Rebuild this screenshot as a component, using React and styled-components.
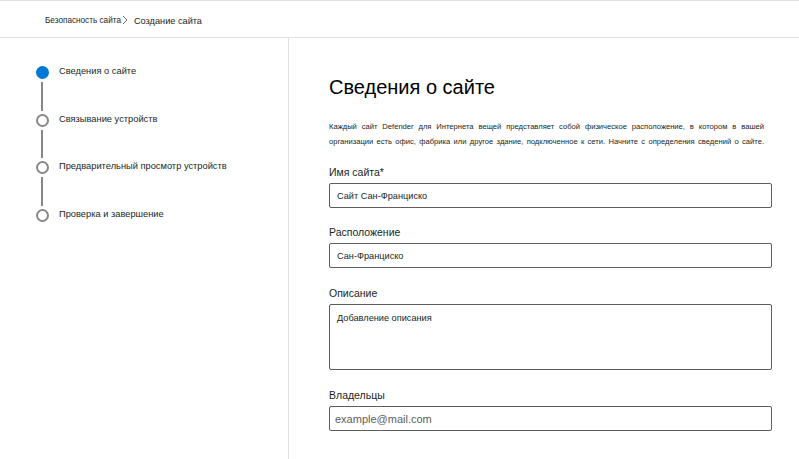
import React from "react";
import styled, { createGlobalStyle } from "styled-components";

const Global = createGlobalStyle`
  html, body { margin: 0; padding: 0; background: #fff; }
  body { font-family: "Liberation Sans", Arial, sans-serif; color: #201f1e; }
  * { box-sizing: border-box; }
`;

const Page = styled.div`
  width: 799px;
  height: 459px;
  display: flex;
  flex-direction: column;
  border-top: 1px solid #e1e1e1;
  overflow: hidden;
`;

const Header = styled.div`
  height: 37px;
  flex: none;
  display: flex;
  align-items: center;
  padding: 3px 0 0 45px;
  border-bottom: 1px solid #e1e1e1;
`;

const Crumb = styled.span`
  font-size: ${(p) => (p.$current ? "9.2px" : "8.2px")};
  color: #201f1e;
`;

const Chevron = styled.svg`
  width: 8px;
  height: 10px;
  margin: 0 5px 2px 0;
`;

const Body = styled.div`
  flex: 1;
  display: flex;
`;

const Side = styled.div`
  width: 289px;
  flex: none;
  border-right: 1px solid #e1e1e1;
  padding: 28px 0 0 36px;
`;

const Step = styled.div`
  display: flex;
  align-items: flex-start;
  height: ${(p) => (p.$last ? "auto" : "47.5px")};
`;

const Marker = styled.div`
  width: 12px;
  flex: none;
  display: flex;
  flex-direction: column;
  align-items: center;
  align-self: stretch;
`;

const Dot = styled.div`
  width: 13px;
  height: 13px;
  border-radius: 50%;
  flex: none;
  background: ${(p) => (p.$active ? "#0078d4" : "#fff")};
  border: ${(p) => (p.$active ? "none" : "2px solid #8a8886")};
`;

const Line = styled.div`
  width: 2px;
  flex: 1;
  background: #8a8886;
  margin: 3px 0 3px;
`;

const StepLabel = styled.span`
  font-size: 9.3px;
  margin-left: 11px;
  line-height: 13px;
  margin-top: -1px;
  color: #201f1e;
`;

const Main = styled.div`
  flex: 1;
  padding: 36px 27px 0 40px;
`;

const Title = styled.h1`
  margin: 0;
  font-size: 20px;
  font-weight: 400;
  line-height: 26px;
  color: #000;
`;

const Desc = styled.div`
  margin: 19px 8px 0 0;
  font-size: 7.6px;
  line-height: 15px;
  color: #201f1e;
`;

const DescLine = styled.span`
  display: block;
  text-align: justify;
  text-align-last: justify;
  white-space: nowrap;
`;

const Field = styled.div`
  display: flex;
  flex-direction: column;
  margin-top: ${(p) => p.$mt || "17px"};
`;

const Label = styled.label`
  font-size: 10.5px;
  line-height: 14px;
  margin-bottom: 4px;
  color: #201f1e;
`;

const Input = styled.div`
  height: ${(p) => p.$h || "25px"};
  border: 1px solid #605e5c;
  border-radius: 2px;
  display: flex;
  align-items: ${(p) => (p.$multi ? "flex-start" : "center")};
  padding: ${(p) => (p.$multi ? "8px 6px" : "0 7px")};
  font-size: ${(p) => (p.$placeholder ? "11px" : "9.2px")};
  color: ${(p) => (p.$placeholder ? "#605e5c" : "#201f1e")};
  padding-left: ${(p) => (p.$placeholder ? "5px" : "7px")};
`;

const steps = [
  "Сведения о сайте",
  "Связывание устройств",
  "Предварительный просмотр устройств",
  "Проверка и завершение",
];

export default function App() {
  return (
    <>
      <Global />
      <Page>
        <Header>
          <Crumb>Безопасность сайта</Crumb>
          <Chevron viewBox="0 0 8 10">
            <path d="M2 1 L6 5 L2 9" fill="none" stroke="#605e5c" strokeWidth="0.9" />
          </Chevron>
          <Crumb $current>Создание сайта</Crumb>
        </Header>
        <Body>
          <Side>
            {steps.map((s, i) => (
              <Step key={s} $last={i === steps.length - 1}>
                <Marker>
                  <Dot $active={i === 0} />
                  {i < steps.length - 1 && <Line />}
                </Marker>
                <StepLabel>{s}</StepLabel>
              </Step>
            ))}
          </Side>
          <Main>
            <Title>Сведения о сайте</Title>
            <Desc>
              <DescLine>
                Каждый сайт Defender для Интернета вещей представляет собой физическое расположение, в котором в вашей
              </DescLine>
              <DescLine>
                организации есть офис, фабрика или другое здание, подключенное к сети. Начните с определения сведений о сайте.
              </DescLine>
            </Desc>
            <Field $mt="16px">
              <Label>Имя сайта*</Label>
              <Input>Сайт Сан-Франциско</Input>
            </Field>
            <Field>
              <Label>Расположение</Label>
              <Input>Сан-Франциско</Input>
            </Field>
            <Field $mt="18px">
              <Label>Описание</Label>
              <Input $multi $h="66px">Добавление описания</Input>
            </Field>
            <Field $mt="18px">
              <Label>Владельцы</Label>
              <Input $placeholder>example@mail.com</Input>
            </Field>
          </Main>
        </Body>
      </Page>
    </>
  );
}
